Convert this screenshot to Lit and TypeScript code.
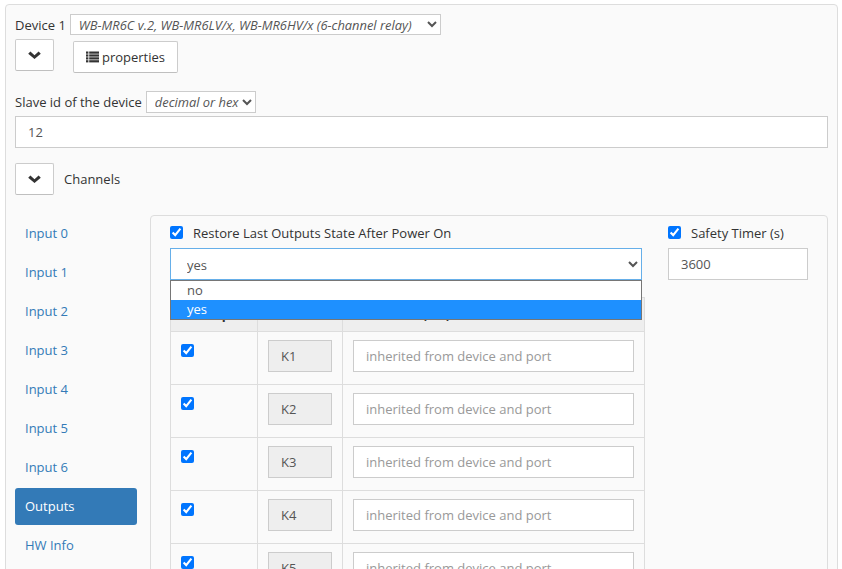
import { LitElement, html, css } from "lit";
import { customElement } from "lit/decorators.js";

const chev = html`<svg class="chev" viewBox="0 0 13 8" width="13" height="8"><path d="M0.2 2.8 L2.4 0.6 L6.5 4.2 L10.6 0.6 L12.8 2.8 L6.5 8 Z" fill="#333"/></svg>`;
const list = html`<svg class="list" viewBox="0 0 13 12" width="13" height="12"><g fill="#333"><rect x="0" y="0.5" width="2.4" height="2.2"/><rect x="0" y="3.4" width="2.4" height="2.2"/><rect x="0" y="6.3" width="2.4" height="2.2"/><rect x="0" y="9.2" width="2.4" height="2.2"/><rect x="3.2" y="0.5" width="9.8" height="2.2"/><rect x="3.2" y="3.4" width="9.8" height="2.2"/><rect x="3.2" y="6.3" width="9.8" height="2.2"/><rect x="3.2" y="9.2" width="9.8" height="2.2"/></g></svg>`;

@customElement("app-root")
export class AppRoot extends LitElement {
  static styles = css`
    :host { display: block; height: 569px; overflow: hidden; font-family: "Open Sans", sans-serif; font-size: 13px; color: #333; background: #fff; }
    * { box-sizing: border-box; }
    .card { margin: 4px 5px 0 5px; width: 833px; height: 700px; background: #fafafa; border: 1px solid #ddd; border-radius: 4px; padding: 9px; }
    .row { display: flex; align-items: center; }
    .dev { height: 21px; gap: 4px; }
    select { font: inherit; font-size: 12.88px; color: #555; background: #fff; border: 1px solid #ccc; font-style: italic; padding: 0 4px; border-radius: 0; }
    .devsel { width: 371px; height: 21px; }
    .btnrow { align-items: flex-start; margin-top: 4px; gap: 19px; }
    .btn { display: flex; align-items: center; justify-content: center; background: #fff; border: 1px solid #ccc; border-bottom-color: #bfbfbf; border-radius: 2px; height: 32px; color: #333; font: inherit; padding: 0; }
    .sq { width: 39px; padding-bottom: 1px; }
    .props { width: 105px; margin-top: 2px; gap: 3px; }
    .slave { margin-top: 18px; height: 22px; gap: 4px; }
    .slavesel { width: 110px; height: 22px; padding-right: 0; }
    .input { display: flex; align-items: center; background: #fff; border: 1px solid #ccc; height: 32px; padding: 0 12px; color: #555; }
    .id { margin-top: 3px; width: 813px; }
    .chan { margin-top: 15px; gap: 10px; }
    .main { display: flex; margin-top: 20px; align-items: flex-start; }
    .nav { width: 122px; margin-right: 13px; display: flex; flex-direction: column; gap: 2px; }
    .pill { height: 37px; display: flex; align-items: center; padding: 0 10px 2px; color: #337ab7; border-radius: 3px; }
    .pill.on { background: #337ab7; color: #fff; }
    .inner { position: relative; width: 678px; height: 500px; border: 1px solid #ddd; border-radius: 4px; padding: 10px 19px 0; display: flex; gap: 26px; }
    .left { width: 472px; }
    .right { width: 140px; }
    .chk { height: 13px; display: flex; align-items: center; gap: 10px; line-height: 13px; white-space: nowrap; }
    .chk span { padding-top: 2px; }
    input[type="checkbox"] { margin: 0; width: 13px; height: 13px; flex: none; }
    .selwrap { position: relative; z-index: 2; height: 32px; margin-top: 9px; }
    .bigsel { width: 472px; height: 32px; font-size: 13px; font-style: normal; border-color: #66afe9; padding: 2px 0 0 12px; display: block; }
    .popup { position: absolute; z-index: 3; left: 0; top: 32px; width: 472px; height: 40px; background: #fff; border: 1px solid #767676; color: #555; }
    .opt { height: 19px; padding: 0 16px; line-height: 19px; }
    .opt.sel { background: #1e90ff; color: #fff; }
    .safety { margin-top: 9px; width: 140px; }
    table { border-collapse: collapse; table-layout: fixed; width: 474px; margin-top: 17px; }
    th { background: #eee; height: 34px; border: 1px solid #ddd; font-weight: 700; color: #333; padding: 0 10px 8px; text-align: left; vertical-align: bottom; white-space: nowrap; }
    td { height: 53px; border: 1px solid #ddd; padding: 8px 10px 0; vertical-align: top; }
    td input[type="checkbox"] { display: block; margin-top: 4px; }
    .name { background: #eee; width: 64px; height: 32px; }
    .ph { width: 281px; color: #999; }
    .c1 { width: 87px; }
    .c2 { width: 85px; }
    .c3 { width: 302px; }
  `;

  render() {
    const rows = ["K1", "K2", "K3", "K4", "K5"];
    const pills = ["Input 0", "Input 1", "Input 2", "Input 3", "Input 4", "Input 5", "Input 6", "Outputs", "HW Info"];
    return html`
      <div class="card">
        <div class="row dev"><span>Device 1</span>
          <select class="devsel"><option>WB-MR6C v.2, WB-MR6LV/x, WB-MR6HV/x (6-channel relay)</option></select></div>
        <div class="row btnrow">
          <button class="btn sq">${chev}</button>
          <button class="btn props">${list}<span>properties</span></button>
        </div>
        <div class="row slave"><span>Slave id of the device</span>
          <select class="slavesel"><option>decimal or hex</option></select></div>
        <div class="input id">12</div>
        <div class="row chan"><button class="btn sq">${chev}</button><span>Channels</span></div>
        <div class="main">
          <div class="nav">${pills.map((p) => html`<div class="pill ${p === "Outputs" ? "on" : ""}">${p}</div>`)}</div>
          <div class="inner">
            <div class="left">
              <label class="chk"><input type="checkbox" checked /><span>Restore Last Outputs State After Power On</span></label>
              <div class="selwrap">
                <select class="bigsel"><option>yes</option></select>
                <div class="popup"><div class="opt">no</div><div class="opt sel">yes</div></div>
              </div>
              <table>
                <colgroup><col class="c1" /><col class="c2" /><col class="c3" /></colgroup>
                <thead><tr><th>Startup</th><th>Name</th><th>Read limit (ms)</th></tr></thead>
                <tbody>
                  ${rows.map((k) => html`<tr>
                    <td><input type="checkbox" checked /></td>
                    <td><div class="input name">${k}</div></td>
                    <td><div class="input ph">inherited from device and port</div></td>
                  </tr>`)}
                </tbody>
              </table>
            </div>
            <div class="right">
              <label class="chk"><input type="checkbox" checked /><span>Safety Timer (s)</span></label>
              <div class="input safety">3600</div>
            </div>
          </div>
        </div>
      </div>
    `;
  }
}
